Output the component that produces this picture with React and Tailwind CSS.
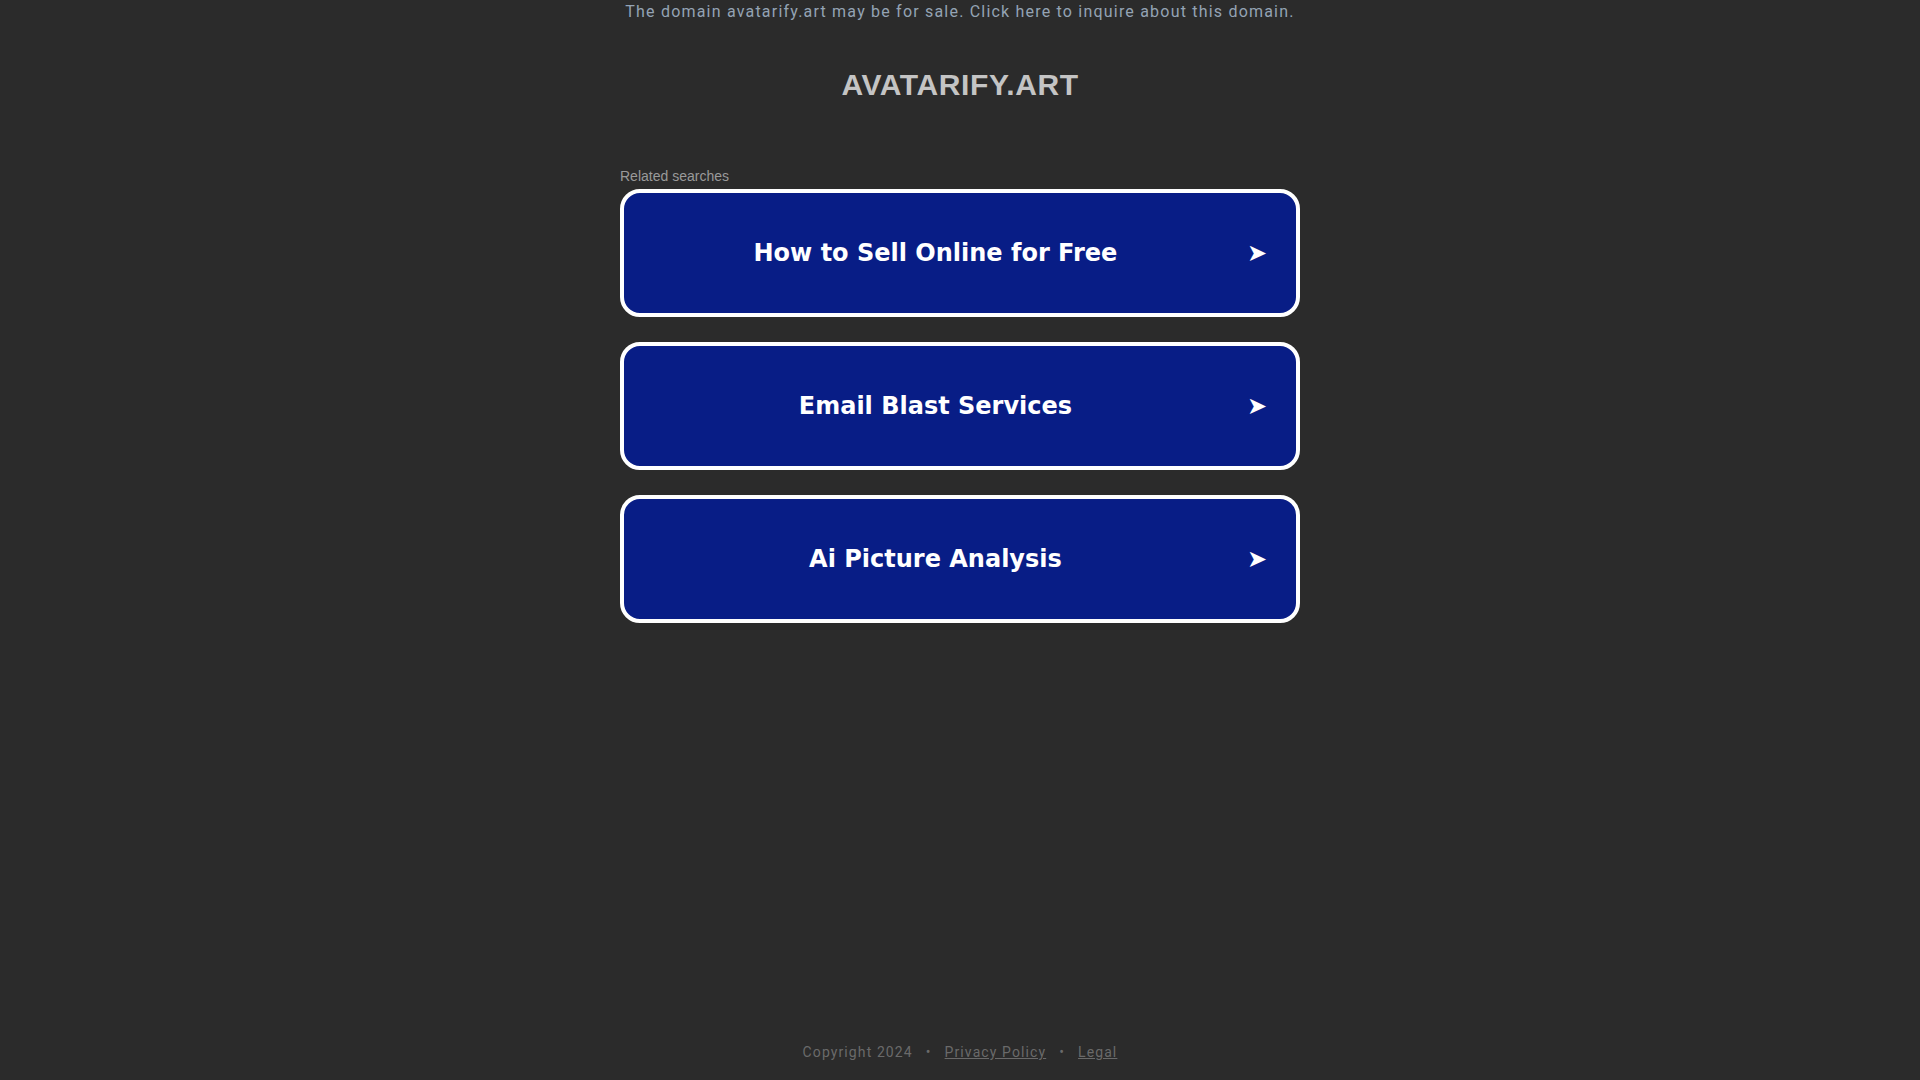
import React from "react";

const searches = ["How to Sell Online for Free", "Email Blast Services", "Ai Picture Analysis"];

export default function App() {
  return (
    <div className="min-h-screen bg-[#2b2b2b] flex flex-col items-center font-['Roboto',sans-serif]">
      {/* Sale banner */}
      <div className="h-[24px] flex items-center text-[16px] tracking-[1.2px] text-[#94a3b4]">
        The domain avatarify.art may be for sale. Click here to inquire about this domain.
      </div>

      <h1 className="mt-[45px] text-[30px] leading-[32px] tracking-[0.6px] font-bold text-[#c4c4c4] font-['Liberation_Sans',sans-serif]">
        AVATARIFY.ART
      </h1>

      <div className="mt-[66px] w-[680px]">
        <div className="text-[14px] leading-[18px] text-[#9a9a9a] font-['Liberation_Sans',sans-serif] mb-[4px]">
          Related searches
        </div>
        <div className="flex flex-col gap-[25px]">
          {searches.map((s) => (
            <div
              key={s}
              className="h-[128px] rounded-[20px] border-[4px] border-white bg-[#081d86] flex items-center pl-0 pr-[29px] font-['DejaVu_Sans',sans-serif] text-white"
            >
              <div className="flex-1 text-center text-[24px] font-bold">{s}</div>
              <div className="text-[24px] leading-none">➤</div>
            </div>
          ))}
        </div>
      </div>

      <div className="flex-1" />

      <div className="mb-[17px] text-[14px] tracking-[1.1px] text-[#6a6a6a] flex items-center gap-[13px]">
        <span>Copyright 2024</span>
        <span>•</span>
        <span className="underline">Privacy Policy</span>
        <span>•</span>
        <span className="underline">Legal</span>
      </div>
    </div>
  );
}
